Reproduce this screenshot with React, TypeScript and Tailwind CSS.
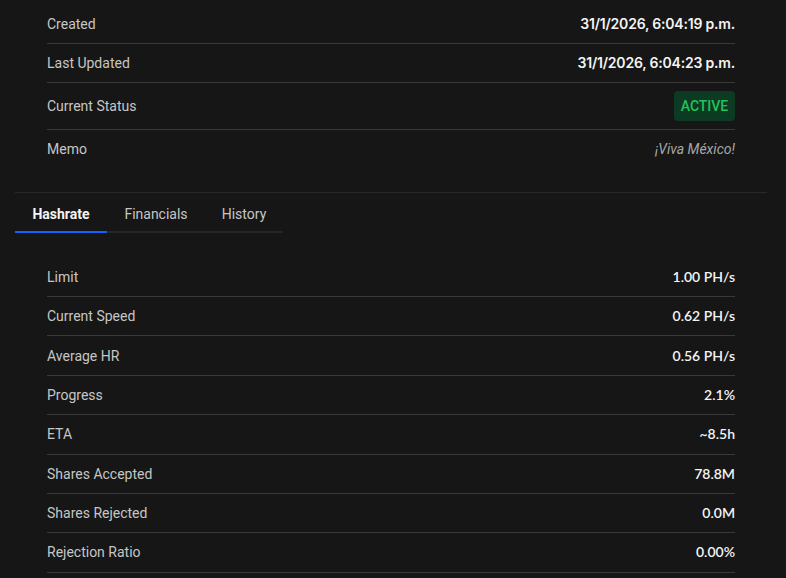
import React from "react";

const top = [
  { label: "Created", value: "31/1/2026, 6:04:19 p.m." },
  { label: "Last Updated", value: "31/1/2026, 6:04:23 p.m." },
];

const hash = [
  ["Limit", "1.00 PH/s"],
  ["Current Speed", "0.62 PH/s"],
  ["Average HR", "0.56 PH/s"],
  ["Progress", "2.1%"],
  ["ETA", "~8.5h"],
  ["Shares Accepted", "78.8M"],
  ["Shares Rejected", "0.0M"],
  ["Rejection Ratio", "0.00%"],
];

const labelFont = { fontFamily: "Roboto, 'Noto Sans', sans-serif" };

export default function App() {
  return (
    <div className="min-h-[578px] w-[786px] bg-[#161616] pt-[4.6px] text-[14px]">
      <div className="ml-[15px] mr-[19px]">
        <div className="border-b border-[#292929] px-8 pb-6">
          {top.map((r) => (
            <div
              key={r.label}
              className="flex h-[39.4px] items-center justify-between border-b border-[#393939]"
            >
              <span className="leading-5 text-[#c6c6c6]" style={labelFont}>
                {r.label}
              </span>
              <span
                className="font-semibold leading-5 text-[#f4f4f4]"
                style={{ fontFamily: "Inter, sans-serif", letterSpacing: "-0.2px" }}
              >
                {r.value}
              </span>
            </div>
          ))}
          <div className="flex h-[47px] items-center justify-between border-b border-[#393939]">
            <span className="leading-5 text-[#c6c6c6]" style={labelFont}>
              Current Status
            </span>
            <span
              className="flex h-[30px] w-[61px] items-center justify-center rounded-[4px] bg-[#0c3a22] text-[14px] font-medium text-[#22c35c]"
              style={labelFont}
            >
              ACTIVE
            </span>
          </div>
          <div className="flex h-[37.6px] items-center justify-between">
            <span className="leading-5 text-[#c6c6c6]" style={labelFont}>
              Memo
            </span>
            <span className="italic leading-5 text-[#a8a8a8]" style={labelFont}>
              ¡Viva México!
            </span>
          </div>
        </div>

        <div
          className="flex w-[268px] border-b-2 border-[#262626]"
          style={{ fontFamily: "Roboto, sans-serif" }}
        >
          <div className="-mb-[2px] flex h-[40px] w-[92px] items-center justify-center border-b-2 border-[#0f62fe] pt-[5px] font-bold text-[#f4f4f4]">
            Hashrate
          </div>
          <div className="flex h-[38px] w-[98px] items-center justify-center pt-[5px] text-[#c6c6c6]">
            Financials
          </div>
          <div className="flex h-[38px] w-[78px] items-center justify-center pt-[5px] text-[#c6c6c6]">
            History
          </div>
        </div>

        <div className="px-8 pt-[24.6px]">
          {hash.map(([l, v]) => (
            <div
              key={l}
              className="flex h-[39.4px] items-center justify-between border-b border-[#393939]"
            >
              <span className="leading-5 text-[#c6c6c6]" style={labelFont}>
                {l}
              </span>
              <span
                className="font-semibold leading-5 text-[#f4f4f4]"
                style={{ fontFamily: "Lato, sans-serif" }}
              >
                {v}
              </span>
            </div>
          ))}
        </div>
      </div>
    </div>
  );
}
